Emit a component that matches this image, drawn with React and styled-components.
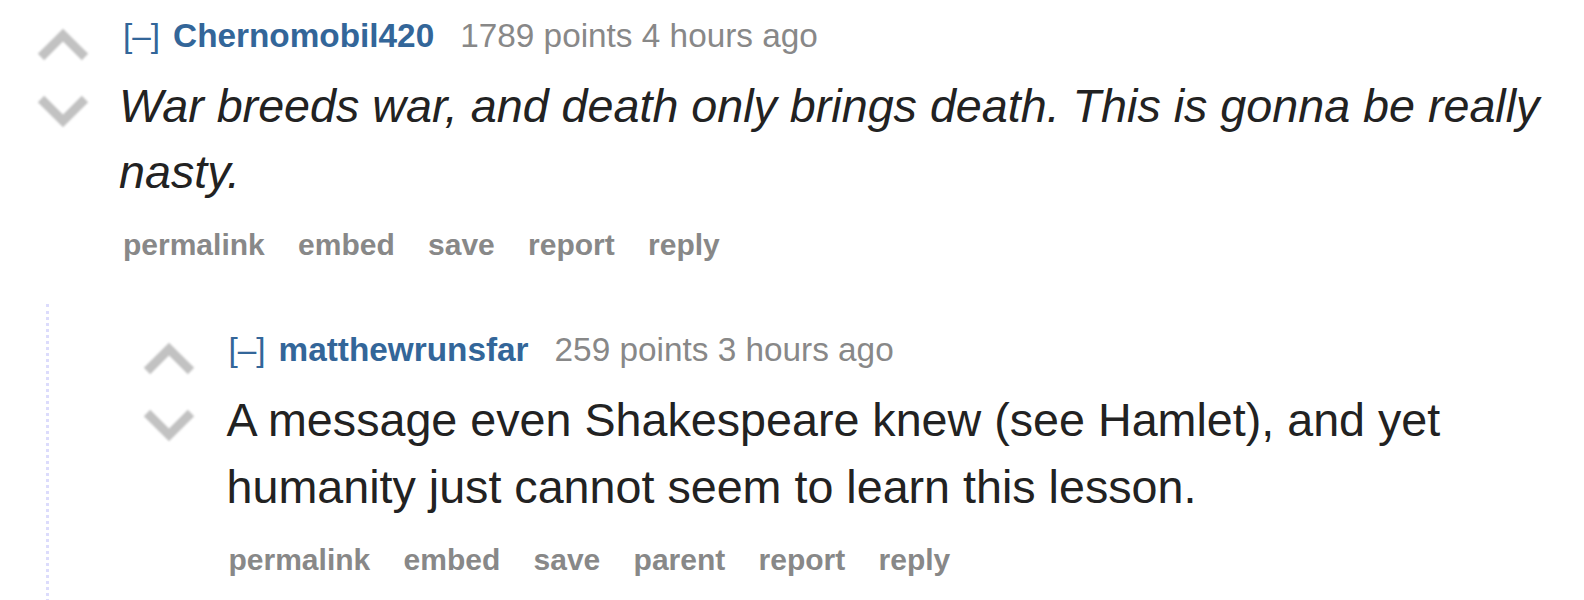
import React from "react";
import styled, { createGlobalStyle } from "styled-components";

const GlobalStyle = createGlobalStyle`
  html, body {
    margin: 0;
    padding: 0;
    background: #ffffff;
  }
  body {
    font-family: "Liberation Sans", Arial, sans-serif;
  }
`;

const Page = styled.div`
  padding: 16px 20px 0 37px;
  height: 600px;
  box-sizing: border-box;
  overflow: hidden;
`;

const Thing = styled.div`
  display: flex;
  flex-direction: column;
`;

const Row = styled.div`
  display: flex;
  align-items: flex-start;
`;

const Midcol = styled.div`
  width: 51px;
  flex-shrink: 0;
  margin-right: 35px;
  padding-top: 12px;
  display: flex;
  flex-direction: column;
  gap: 34px;
`;

const ArrowSvg = styled.svg`
  display: block;
  width: 52px;
  height: 33px;
  filter: blur(1.1px);
`;

const Entry = styled.div`
  flex: 1;
  min-width: 0;
`;

const Tagline = styled.div`
  font-size: 33.33px;
  line-height: 40px;
  color: #888888;
  white-space: nowrap;
`;

const Expand = styled.span`
  color: #336699;
  margin-right: 13px;
`;

const Author = styled.span`
  color: #336699;
  font-weight: bold;
  margin-right: 26px;
`;

const Body = styled.div`
  margin-top: 16.5px;
  margin-left: ${(p) => (p.italic ? "-4px" : "-2px")};
  font-size: 46.67px;
  line-height: 66.67px;
  color: #222222;
  font-style: ${(p) => (p.italic ? "italic" : "normal")};
`;

const Buttons = styled.ul`
  list-style: none;
  margin: 19.5px 0 0;
  padding: 0;
  display: flex;
  gap: 33.3px;
  font-size: 30px;
  line-height: 40px;
  font-weight: bold;
  color: #888888;
`;

const Child = styled.div`
  margin-top: 39px;
  margin-left: 8.5px;
  border-left: 3.33px dotted #dcdcfc;
  padding: 26px 0 40px 94px;
`;

const Arrow = ({ up }) => (
  <ArrowSvg viewBox="0 0 52 33">
    <polyline
      points={up ? "4,29 26,7 48,29" : "4,4 26,26 48,4"}
      fill="none"
      stroke="#c2c2c2"
      strokeWidth="9"
      strokeLinejoin="miter"
    />
  </ArrowSvg>
);

const Comment = ({ author, points, time, italic, text, buttons, children }) => (
  <Thing>
    <Row>
      <Midcol>
        <Arrow up />
        <Arrow />
      </Midcol>
      <Entry>
        <Tagline>
          <Expand>[–]</Expand>
          <Author>{author}</Author>
          {points} points {time}
        </Tagline>
        <Body italic={italic}>{text}</Body>
        <Buttons>
          {buttons.map((b) => (
            <li key={b}>{b}</li>
          ))}
        </Buttons>
      </Entry>
    </Row>
    {children && <Child>{children}</Child>}
  </Thing>
);

export default function App() {
  return (
    <>
      <GlobalStyle />
      <Page>
        <Comment
          author="Chernomobil420"
          points="1789"
          time="4 hours ago"
          italic
          text="War breeds war, and death only brings death. This is gonna be really nasty."
          buttons={["permalink", "embed", "save", "report", "reply"]}
        >
          <Comment
            author="matthewrunsfar"
            points="259"
            time="3 hours ago"
            text="A message even Shakespeare knew (see Hamlet), and yet humanity just cannot seem to learn this lesson."
            buttons={["permalink", "embed", "save", "parent", "report", "reply"]}
          />
        </Comment>
      </Page>
    </>
  );
}
